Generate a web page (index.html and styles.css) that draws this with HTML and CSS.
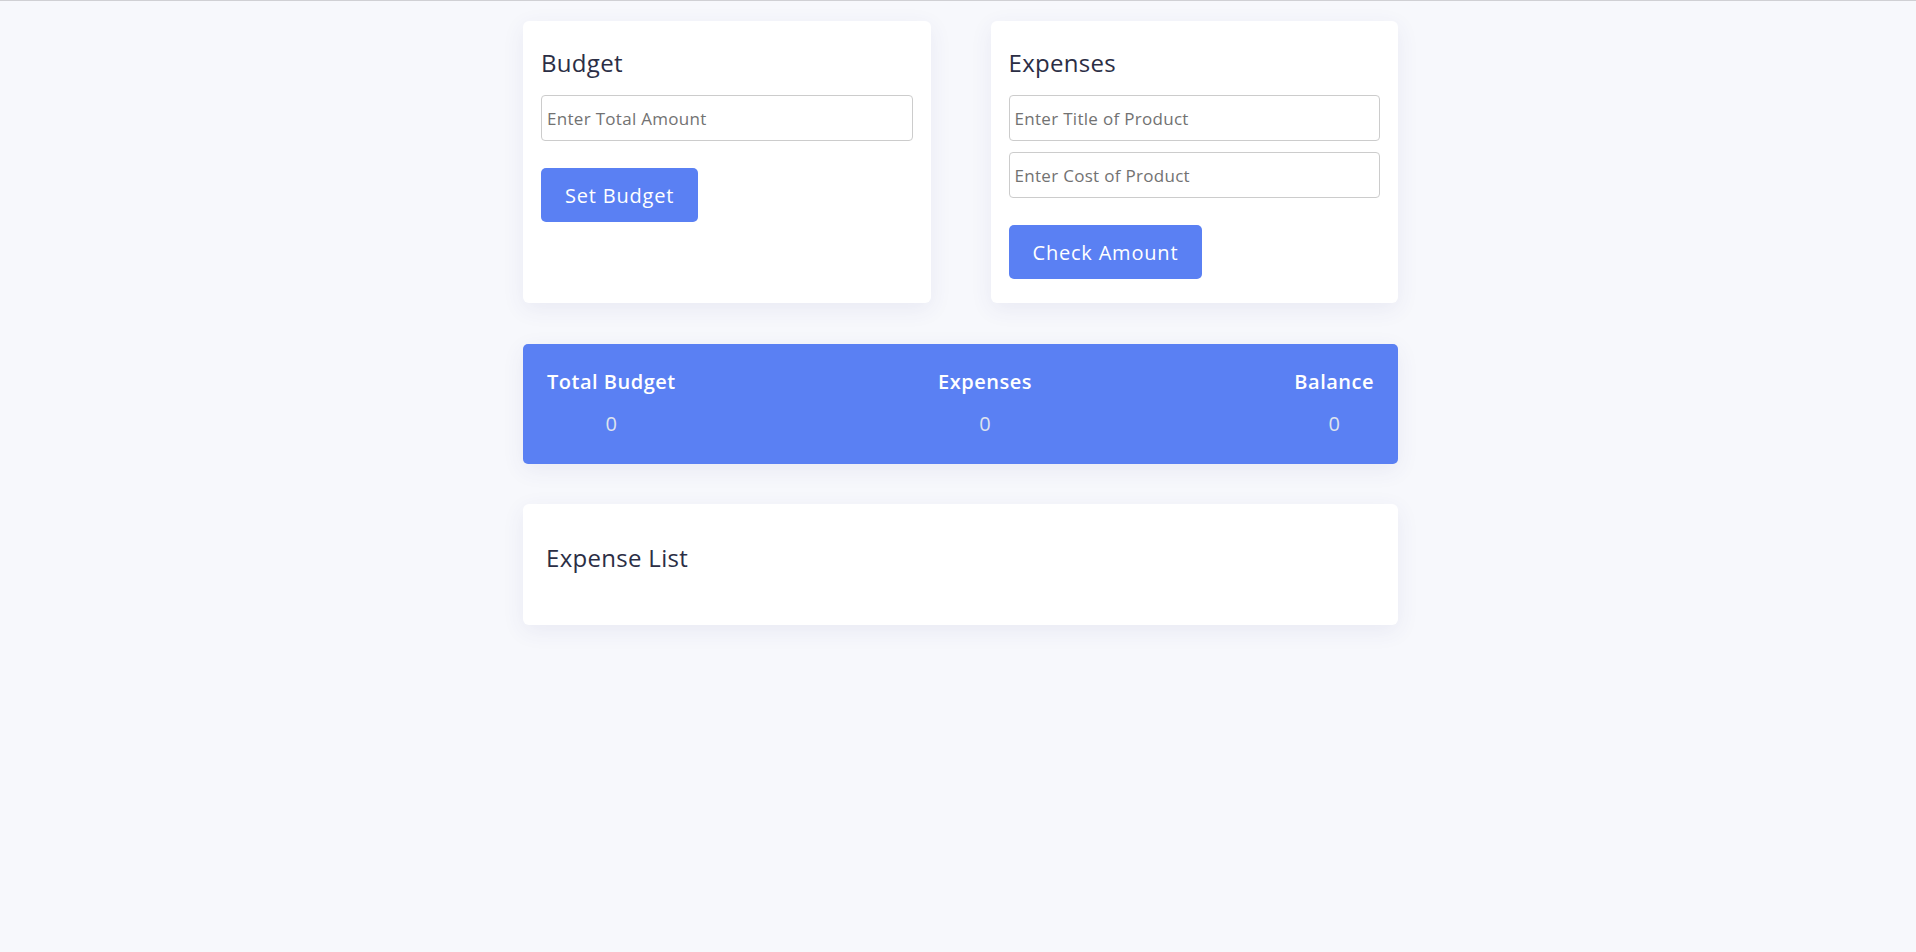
FILE: index.html
```html
<!DOCTYPE html>
<html lang="en">
<head>
<meta charset="utf-8">
<title>Budget App</title>
<link rel="stylesheet" href="styles.css">
</head>
<body>
<main class="container">
  <section class="top-grid">
    <div class="card">
      <h2 class="card-title">Budget</h2>
      <input class="field" type="number" placeholder="Enter Total Amount">
      <button class="btn">Set Budget</button>
    </div>
    <div class="card">
      <h2 class="card-title">Expenses</h2>
      <input class="field" type="text" placeholder="Enter Title of Product">
      <input class="field field-next" type="number" placeholder="Enter Cost of Product">
      <button class="btn">Check Amount</button>
    </div>
  </section>

  <section class="summary">
    <div class="stat">
      <div class="stat-label">Total Budget</div>
      <div class="stat-value">0</div>
    </div>
    <div class="stat">
      <div class="stat-label">Expenses</div>
      <div class="stat-value">0</div>
    </div>
    <div class="stat">
      <div class="stat-label">Balance</div>
      <div class="stat-value">0</div>
    </div>
  </section>

  <section class="card list-card">
    <h2 class="card-title">Expense List</h2>
  </section>
</main>
</body>
</html>
```

FILE: styles.css
```css
* {
  box-sizing: border-box;
}

html, body {
  margin: 0;
  padding: 0;
}

body {
  background: #f7f8fc;
  border-top: 1px solid #d0d0d4;
  font-family: "Open Sans", "Noto Sans", sans-serif;
  min-height: 952px;
}

.container {
  width: 875px;
  margin: 20px auto 0;
  padding-left: 3px;
  box-sizing: content-box;
  position: relative;
  left: 1px;
}

.top-grid {
  display: grid;
  grid-template-columns: 1fr 1fr;
  gap: 60px;
}

.card {
  background: #ffffff;
  border-radius: 6px;
  box-shadow: 0 6px 22px rgba(60, 70, 140, 0.08);
  padding: 26px 18px 24px;
  display: flex;
  flex-direction: column;
  align-items: flex-start;
}

.card-title {
  margin: 0 0 16px;
  font-size: 24px;
  line-height: 32px;
  font-weight: 500;
  color: #2b2e45;
  letter-spacing: 0.3px;
}

.field {
  width: 100%;
  height: 46px;
  border: 1px solid #cccccc;
  border-radius: 4px;
  padding: 0 5px;
  font-family: inherit;
  font-size: 17px;
  letter-spacing: 0.3px;
  color: #333;
  background: #fff;
  outline: none;
}

.field::placeholder {
  color: #727272;
}

.field-next {
  margin-top: 11px;
}

.btn {
  margin-top: 27px;
  height: 54px;
  padding: 0 24px;
  border: none;
  border-radius: 5px;
  background: #5a80f3;
  color: #ffffff;
  font-family: inherit;
  font-size: 20px;
  letter-spacing: 0.8px;
  cursor: pointer;
}

.summary {
  margin-top: 41px;
  height: 120px;
  background: #5a80f3;
  border-radius: 5px;
  box-shadow: 0 6px 22px rgba(60, 70, 140, 0.08);
  padding: 24px 24px 0;
  display: flex;
  justify-content: space-between;
  align-items: flex-start;
}

.stat {
  display: flex;
  flex-direction: column;
  align-items: center;
}

.stat-label {
  font-size: 20px;
  line-height: 28px;
  font-weight: 600;
  letter-spacing: 0.5px;
  color: #ffffff;
}

.stat-value {
  margin-top: 14px;
  font-size: 20px;
  line-height: 28px;
  color: #dfe3ee;
}

.list-card {
  margin-top: 40px;
  height: 121px;
  padding: 38px 23px 0;
}

.list-card .card-title {
  margin: 0;
}
```
